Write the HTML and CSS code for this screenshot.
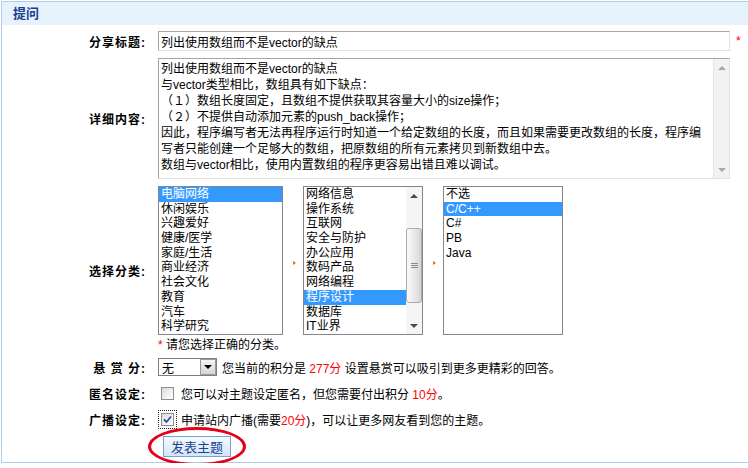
FILE: index.html
```html
<!DOCTYPE html>
<html lang="zh-CN">
<head>
  <meta charset="UTF-8" />
  <title>提问</title>
  <link rel="stylesheet" href="styles.css">
</head>
<body>
  <div class="panel">
    <div class="panel-head">提问</div>

    <div class="ask-form">
      <div class="row row-title">
        <div class="label">分享标题:</div>
        <div class="field">
          <input type="text" class="text-input" value="列出使用数组而不是vector的缺点">
          <span class="req">*</span>
        </div>
      </div>

      <div class="row row-detail">
        <div class="label">详细内容:</div>
        <div class="field">
          <div class="textbox">
            <textarea class="textbox-area" wrap="off">列出使用数组而不是vector的缺点
与vector类型相比，数组具有如下缺点：
（１）数组长度固定，且数组不提供获取其容量大小的size操作；
（２）不提供自动添加元素的push_back操作；
因此，程序编写者无法再程序运行时知道一个给定数组的长度，而且如果需要更改数组的长度，程序编
写者只能创建一个足够大的数组，把原数组的所有元素拷贝到新数组中去。
数组与vector相比，使用内置数组的程序更容易出错且难以调试。</textarea>
            <div class="scrollbar scrollbar-off">
              <span class="sb-btn"><i class="tri-up"></i></span>
              <span class="sb-track"></span>
              <span class="sb-btn"><i class="tri-down"></i></span>
            </div>
          </div>
        </div>
      </div>

      <div class="row row-cat">
        <div class="label">选择分类:</div>
        <div class="field field-col">
          <div class="lists">
            <ul class="listbox list-main">
              <li class="on">电脑网络</li>
              <li>休闲娱乐</li>
              <li>兴趣爱好</li>
              <li>健康/医学</li>
              <li>家庭/生活</li>
              <li>商业经济</li>
              <li>社会文化</li>
              <li>教育</li>
              <li>汽车</li>
              <li>科学研究</li>
            </ul>
            <span class="list-arrow"><i></i></span>
            <div class="listbox list-sub">
              <ul class="list-items">
                <li>网络信息</li>
                <li>操作系统</li>
                <li>互联网</li>
                <li>安全与防护</li>
                <li>办公应用</li>
                <li>数码产品</li>
                <li>网络编程</li>
                <li class="on">程序设计</li>
                <li>数据库</li>
                <li>IT业界</li>
              </ul>
              <div class="scrollbar">
                <span class="sb-btn"><i class="tri-up"></i></span>
                <span class="sb-track">
                  <span class="sb-thumb"><i></i><i></i><i></i></span>
                </span>
                <span class="sb-btn"><i class="tri-down"></i></span>
              </div>
            </div>
            <span class="list-arrow"><i></i></span>
            <ul class="listbox list-lang">
              <li>不选</li>
              <li class="on">C/C++</li>
              <li>C#</li>
              <li>PB</li>
              <li>Java</li>
            </ul>
          </div>
          <div class="hint"><span class="red">*</span> 请您选择正确的分类。</div>
        </div>
      </div>

      <div class="row row-reward">
        <div class="label">悬 赏 分:</div>
        <div class="field">
          <div class="pick">
            <span class="pick-value">无</span>
            <span class="pick-btn"><i class="tri-down"></i></span>
          </div>
          <span class="note">您当前的积分是 <span class="red">277分</span> 设置悬赏可以吸引到更多更精彩的回答。</span>
        </div>
      </div>

      <div class="row row-anon">
        <div class="label">匿名设定:</div>
        <div class="field">
          <span class="check-wrap"><span class="check"></span></span>
          <span class="note">您可以对主题设定匿名，但您需要付出积分 <span class="red">10分</span>。</span>
        </div>
      </div>

      <div class="row row-cast">
        <div class="label">广播设定:</div>
        <div class="field">
          <span class="check-wrap focus">
            <span class="check">
              <svg width="11" height="11" viewBox="0 0 11 11"><path d="M2 5.5 L4.5 8 L9 2.5" fill="none" stroke="#2a4fb0" stroke-width="1.8"/></svg>
            </span>
          </span>
          <span class="note">申请站内广播(需要<span class="red">20分</span>)，可以让更多网友看到您的主题。</span>
        </div>
      </div>

      <div class="row row-submit">
        <div class="label"></div>
        <div class="field">
          <span class="submit-wrap">
            <button class="submit">发表主题</button>
            <span class="ring"></span>
          </span>
        </div>
      </div>
    </div>
  </div>
</body>
</html>
```

FILE: styles.css
```css
* {
  box-sizing: border-box;
}

body {
  margin: 0;
  font-family: "Liberation Sans", "Noto Sans CJK SC", sans-serif;
  font-size: 12px;
  color: #000;
  background: #fff;
}

.panel {
  margin: 1px 0 0 1px;
  height: 462px;
  border: 1px solid #b3cde8;
  border-right: 0;
}

.panel-head {
  height: 23px;
  line-height: 23px;
  padding-left: 11px;
  background: #e6f2fc;
  color: #1d3e8e;
  font-size: 13px;
  font-weight: bold;
}

.row {
  display: flex;
  align-items: center;
}

.label {
  flex: none;
  width: 144px;
  margin-right: 12px;
  text-align: right;
  font-size: 12px;
  font-weight: bold;
  letter-spacing: 1px;
}

.field {
  display: flex;
  align-items: center;
}

.field-col {
  flex-direction: column;
  align-items: flex-start;
}

.red {
  color: #f00;
}

.note {
  margin-left: 5px;
  white-space: nowrap;
}

/* rows */
.row-title { margin-top: 6px; }
.row-detail { margin-top: 7px; }
.row-cat { margin-top: 7px; }
.row-reward { margin-top: 2px; height: 20px; }
.row-anon { margin-top: 6px; height: 20px; }
.row-cast { margin-top: 6px; height: 20px; }
.row-submit { margin-top: 7px; }

/* title input */
.text-input {
  width: 572px;
  height: 20px;
  padding: 0 2px;
  border: 1px solid;
  border-color: #a5a5a5 #e1e1e1 #e1e1e1 #a5a5a5;
  font: inherit;
  color: #000;
}

.req {
  margin-left: 6px;
  color: #f00;
}

/* detail box */
.textbox {
  display: flex;
  width: 572px;
  height: 121px;
  border: 1px solid;
  border-color: #a5a5a5 #e1e1e1 #e1e1e1 #a5a5a5;
}

.textbox-area {
  flex: 1;
  margin: 0;
  padding: 2px 0 0 2px;
  border: 0;
  resize: none;
  overflow: hidden;
  font: inherit;
  line-height: 16px;
  color: #000;
}

/* fake xp scrollbar */
.scrollbar {
  flex: none;
  width: 16px;
  display: flex;
  flex-direction: column;
  background: #f2f2f0;
  border-left: 1px solid #e6e6e6;
}

.sb-btn {
  flex: none;
  height: 17px;
  display: flex;
  align-items: center;
  justify-content: center;
}

.sb-track {
  flex: 1;
  position: relative;
}

.tri-up, .tri-down {
  width: 0;
  height: 0;
  border-left: 4px solid transparent;
  border-right: 4px solid transparent;
}

.tri-up { border-bottom: 4px solid #4d4d4d; }
.tri-down { border-top: 4px solid #4d4d4d; }

.scrollbar-off .tri-up { border-bottom-color: #a8a8a8; }
.scrollbar-off .tri-down { border-top-color: #a8a8a8; }

.sb-thumb {
  position: absolute;
  left: 0;
  right: 0;
  top: 24px;
  height: 75px;
  border: 1px solid #a9a9a9;
  border-radius: 3px;
  background: linear-gradient(to right, #fbfbfb, #e6e6e6 60%, #d6d6d6);
  display: flex;
  flex-direction: column;
  align-items: center;
  justify-content: center;
  gap: 1px;
}

.sb-thumb i {
  width: 7px;
  height: 1px;
  background: #8a8a8a;
}

/* category lists */
.lists {
  display: flex;
  align-items: center;
}

.listbox {
  height: 149px;
  margin: 0;
  padding: 0;
  list-style: none;
  border: 1px solid #83868c;
  background: #fff;
  overflow: hidden;
}

.listbox li,
.list-items li {
  height: 14.7px;
  line-height: 14.7px;
  padding-left: 2px;
  white-space: nowrap;
}

.listbox li.on {
  background: #3399ff;
  color: #fff;
}

.list-main { width: 125px; }
.list-lang { width: 120px; }

.list-sub {
  width: 120px;
  display: flex;
}

.list-items {
  flex: 1;
  margin: 0;
  padding: 0;
  list-style: none;
}

.list-sub .scrollbar {
  border-left: 0;
  background: #f5f5f3;
}

.list-arrow {
  width: 20px;
  display: flex;
  justify-content: center;
  padding-left: 3px;
  margin-top: 4px;
}

.list-arrow i {
  width: 0;
  height: 0;
  border-left: 3px solid #d27a10;
  border-top: 2px solid transparent;
  border-bottom: 2px solid transparent;
}

.hint {
  height: 20px;
  line-height: 20px;
}

/* reward select */
.pick {
  width: 59px;
  height: 18px;
  display: flex;
  align-items: center;
  border: 1px solid #7f7f7f;
  background: #fff;
}

.pick-value {
  flex: 1;
  padding-left: 3px;
}

.pick-btn {
  width: 16px;
  height: 16px;
  display: flex;
  align-items: center;
  justify-content: center;
  border: 1px solid #9a9a9a;
  background: linear-gradient(#f4f4f4, #d6d6d6);
}

.pick-btn .tri-down {
  border-left-width: 4px;
  border-right-width: 4px;
  border-top: 4px solid #000;
}

/* checkboxes */
.check-wrap {
  display: inline-flex;
  padding: 2px;
  border: 1px dotted transparent;
}

.check-wrap.focus {
  border-color: #222;
}

.check {
  width: 13px;
  height: 13px;
  display: flex;
  align-items: center;
  justify-content: center;
  border: 1px solid #8e8f8f;
  background: linear-gradient(135deg, #d9d9d4, #f6f6f6 70%, #fff);
}

.row-anon .check-wrap,
.row-cast .check-wrap {
  margin-right: -1px;
}

/* submit */
.submit-wrap {
  position: relative;
  margin-left: 5px;
  display: inline-flex;
}

.submit {
  height: 21px;
  padding: 0 7px;
  border: 1px solid #74a2d5;
  background: linear-gradient(#f6faff, #d4e5f7);
  color: #1c4495;
  font-family: "Noto Sans CJK SC", sans-serif;
  font-size: 13px;
  line-height: 19px;
  cursor: pointer;
}

.ring {
  position: absolute;
  left: -15px;
  top: -9px;
  width: 98px;
  height: 39px;
  border: 3px solid #e3001b;
  border-radius: 50%;
  pointer-events: none;
}
```
